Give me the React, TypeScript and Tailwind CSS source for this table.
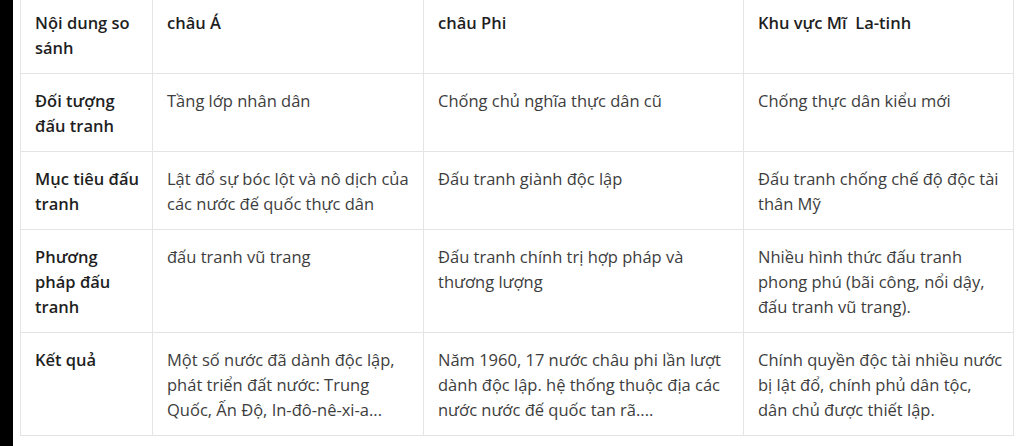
import React from 'react';

// Comparison table: châu Á / châu Phi / Mĩ La-tinh

type Row = {
  label: React.ReactNode;
  cells: React.ReactNode[];
};

const HEADERS = ['châu Á', 'châu Phi', 'Khu vực Mĩ\u00a0 La-tinh'];

const ROWS: Row[] = [
  {
    label: <>Đối tượng<br />đấu tranh</>,
    cells: ['Tầng lớp nhân dân', 'Chống chủ nghĩa thực dân cũ', 'Chống thực dân kiểu mới'],
  },
  {
    label: <>Mục tiêu đấu<br />tranh</>,
    cells: [
      <>Lật đổ sự bóc lột và nô dịch của<br />các nước đế quốc thực dân</>,
      'Đấu tranh giành độc lập',
      <>Đấu tranh chống chế độ độc tài<br />thân Mỹ</>,
    ],
  },
  {
    label: <>Phương<br />pháp đấu<br />tranh</>,
    cells: [
      'đấu tranh vũ trang',
      <>Đấu tranh chính trị hợp pháp và<br />thương lượng</>,
      <>Nhiều hình thức đấu tranh<br />phong phú (bãi công, nổi dậy,<br />đấu tranh vũ trang).</>,
    ],
  },
  {
    label: 'Kết quả',
    cells: [
      <>Một số nước đã dành độc lập,<br />phát triển đất nước: Trung<br />Quốc, Ấn Độ, In-đô-nê-xi-a...</>,
      <>Năm 1960, 17 nước châu phi lần lượt<br />dành độc lập. hệ thống thuộc địa các<br />nước nước đế quốc tan rã....</>,
      <>Chính quyền độc tài nhiều nước<br />bị lật đổ, chính phủ dân tộc,<br />dân chủ được thiết lập.</>,
    ],
  },
];

const cellBase = 'border border-[#e4e4e4] align-top px-[14px] pt-[14px] pb-[13px] leading-[25px] whitespace-nowrap';

export default function App() {
  return (
    <div
      className="flex w-[1024px] h-[446px] overflow-hidden bg-white"
      style={{ fontFamily: '"Open Sans", "Noto Sans", sans-serif' }}
    >
      <div className="w-[13px] shrink-0 bg-black" />
      <div className="pl-[7px] -mt-[5px]">
        <table className="border-collapse w-[993px] table-fixed text-[16.5px] text-[#3d3d3d]">
          <colgroup>
            <col className="w-[132px]" />
            <col className="w-[271px]" />
            <col className="w-[320px]" />
            <col className="w-[270px]" />
          </colgroup>
          <thead>
            <tr>
              <th className={`${cellBase} text-left font-semibold text-[#1f1f1f]`}>
                Nội dung so<br />sánh
              </th>
              {HEADERS.map((h) => (
                <th key={h} className={`${cellBase} text-left font-semibold text-[#1f1f1f]`}>
                  {h}
                </th>
              ))}
            </tr>
          </thead>
          <tbody>
            {ROWS.map((row, i) => (
              <tr key={i}>
                <td className={`${cellBase} font-semibold text-[#1f1f1f]`}>{row.label}</td>
                {row.cells.map((c, j) => (
                  <td key={j} className={cellBase}>
                    {c}
                  </td>
                ))}
              </tr>
            ))}
          </tbody>
        </table>
      </div>
    </div>
  );
}
